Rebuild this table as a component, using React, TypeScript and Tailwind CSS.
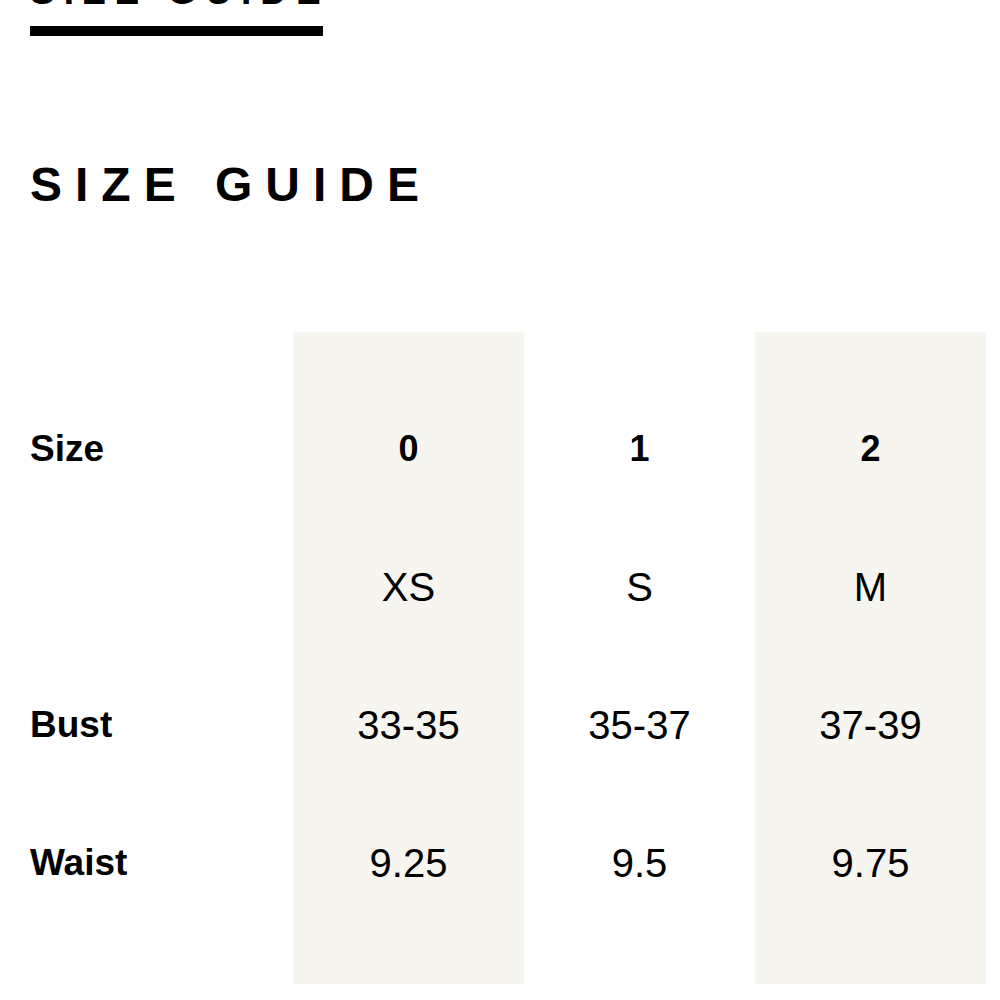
const rows = [
  { label: "Size", values: ["0", "1", "2"], head: true },
  { label: "", values: ["XS", "S", "M"] },
  { label: "Bust", values: ["33-35", "35-37", "37-39"] },
  { label: "Waist", values: ["9.25", "9.5", "9.75"] },
];

function Column({ index, shaded }: { index: number; shaded: boolean }) {
  return (
    <div
      className={`flex flex-col w-[231px] pt-[48px] pb-[52px] ${shaded ? "bg-[#f7f5f0]" : ""}`}
    >
      {rows.map((row, i) => (
        <div
          key={i}
          className={`h-[138px] flex items-center justify-center ${
            row.head ? "text-[36px] font-bold" : "text-[40px]"
          }`}
        >
          {row.values[index]}
        </div>
      ))}
    </div>
  );
}

export default function App() {
  return (
    <div
      className="bg-white text-black w-[1000px] h-[1000px] overflow-hidden"
      style={{ fontFamily: '"Liberation Sans", Arial, sans-serif' }}
    >
      <div className="pl-[30px]">
        <div className="mt-[-27px] text-[37px] leading-none font-bold tracking-[9px] whitespace-nowrap">
          SIZE GUIDE
        </div>
        <div className="mt-[16px] w-[293px] h-[10px] bg-black" />
        <h1 className="mt-[125px] text-[48px] leading-none font-bold tracking-[13px] whitespace-nowrap">
          SIZE GUIDE
        </h1>
      </div>

      <div className="mt-[123px] flex">
        <div className="flex flex-col w-[293px] pl-[30px] pt-[48px] pb-[52px]">
          {rows.map((row, i) => (
            <div key={i} className="h-[138px] flex items-center text-[37px] font-bold">
              {row.label}
            </div>
          ))}
        </div>
        <Column index={0} shaded />
        <Column index={1} shaded={false} />
        <Column index={2} shaded />
      </div>
    </div>
  );
}
